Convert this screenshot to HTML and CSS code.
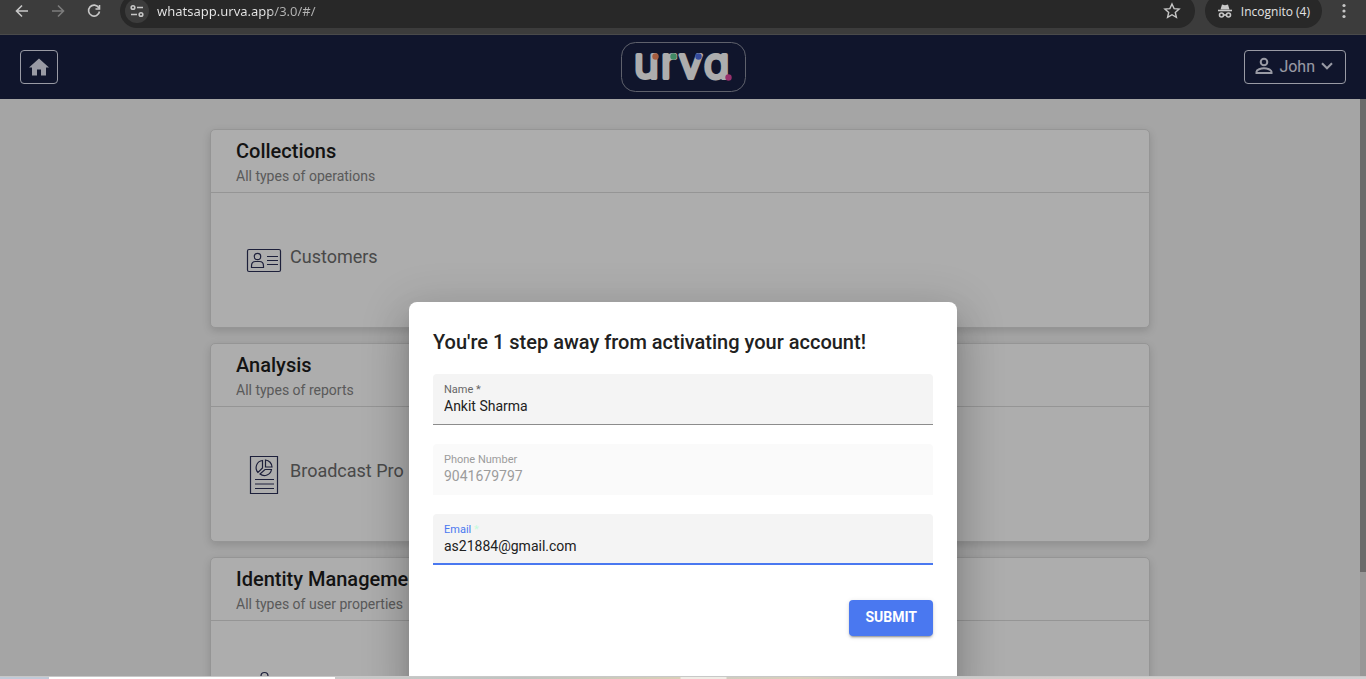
FILE: index.html
```html
<!DOCTYPE html>
<html lang="en">
<head>
    <meta charset="UTF-8">
    <meta name="viewport" content="width=device-width, initial-scale=1.0">
    <title>Urva</title>
    <link rel="stylesheet" href="styles.css">
</head>
<body>
<!-- Browser toolbar -->
<div class="toolbar">
    <button class="tool-btn" aria-label="Back">
        <svg width="16" height="16" viewBox="0 0 16 16"><path d="M14 8H3M8 2.500 2.500 8 8 13.500"/></svg>
    </button>
    <button class="tool-btn tool-btn-off" aria-label="Forward">
        <svg width="16" height="16" viewBox="0 0 16 16"><path d="M2 8h11M8 2.500 13.500 8 8 13.500"/></svg>
    </button>
    <button class="tool-btn" aria-label="Reload">
        <svg width="16" height="16" viewBox="0 0 16 16"><path d="M12.800 4.800A5.500 5.500 0 1 0 13.500 8.500M13.500 2v4h-4"/></svg>
    </button>
    <div class="address">
        <button class="site-btn" aria-label="Site information">
            <svg width="16" height="16" viewBox="0 0 16 16"><circle cx="4" cy="4.500" r="1.800"/><path d="M8 4.500h6M2 11.500h6"/><circle cx="12" cy="11.500" r="1.800"/></svg>
        </button>
        <input class="url" type="text" aria-label="Address" value="whatsapp.urva.app/3.0/#/">
        <button class="star-btn" aria-label="Bookmark">
            <svg width="18" height="18" viewBox="0 0 18 18"><path d="M9 2l2.100 4.600 5 .5-3.800 3.300 1.100 4.900L9 12.700l-4.400 2.600 1.100-4.900L1.900 7.100l5-.5z"/></svg>
        </button>
    </div>
    <button class="incognito">
        <svg width="16" height="16" viewBox="0 0 16 16"><path class="solid" d="M3.500 6.500 5 1.500l3 .8 3-.8 1.500 5z"/><path d="M1 7.500h14"/><circle cx="4.500" cy="12" r="2"/><circle cx="11.500" cy="12" r="2"/><path d="M6.500 12h3"/></svg>
        Incognito (4)
    </button>
    <button class="menu-btn" aria-label="Menu">
        <svg width="4" height="16" viewBox="0 0 4 16"><circle cx="2" cy="2.500" r="1.600"/><circle cx="2" cy="8" r="1.600"/><circle cx="2" cy="13.500" r="1.600"/></svg>
    </button>
</div>

<div class="page">
    <header class="header">
        <button class="outline-btn home-btn" aria-label="Home">
            <svg width="20" height="18" viewBox="0 0 20 18"><path d="M8 17.500v-6h4v6h5V9.500h3L10 .5 0 9.500h3v8z"/></svg>
        </button>
        <a href="#" class="logo" aria-label="urva">
            <svg width="125" height="50" viewBox="0 0 125 50">
                <rect class="logo-frame" x="0.500" y="0.500" width="124" height="49" rx="14"/>
                <text class="logo-text" y="36" x="13 40 58 83">urvɑ</text>
                <circle cx="34.500" cy="14.500" r="3.200" fill="#f58a5f"/>
                <circle cx="52.500" cy="14.500" r="3.200" fill="#5fcb96"/>
                <circle cx="77.500" cy="14.500" r="3.200" fill="#4f6fe8"/>
                <circle cx="107.500" cy="35.500" r="3.200" fill="#e0489f"/>
            </svg>
        </a>
        <button class="outline-btn user-btn">
            <svg width="18" height="18" viewBox="0 0 18 18"><circle cx="9" cy="5" r="3.300"/><path d="M1.500 16v-1.200c0-2.100 4.500-3.500 7.500-3.500s7.500 1.400 7.500 3.500V16z"/></svg>
            John
            <svg width="12" height="8" viewBox="0 0 12 8"><path d="M1 1.200 6 6.300 11 1.200"/></svg>
        </button>
    </header>

    <div class="scroll-area">
        <main class="cards">
            <section class="card">
                <div class="card-head">
                    <h2>Collections</h2>
                    <p>All types of operations</p>
                </div>
                <div class="card-body">
                    <a href="#" class="card-link">
                        <svg width="40" height="40" viewBox="0 0 40 40"><rect x="3.500" y="9.500" width="33" height="22" rx="1.500"/><circle cx="13.500" cy="16.500" r="3.200"/><path d="M7.500 27.500V26c0-3 2-4.500 4-4.500h4c2 0 4 1.500 4 4.500v1.500zM23 16.500h11M23 20.500h11M23 24.500h11"/></svg>
                        <span>Customers</span>
                    </a>
                </div>
            </section>

            <section class="card">
                <div class="card-head">
                    <h2>Analysis</h2>
                    <p>All types of reports</p>
                </div>
                <div class="card-body">
                    <a href="#" class="card-link">
                        <svg width="40" height="40" viewBox="0 0 40 40"><path d="M6.500 2.500h27v37h-27zM11 25.500h19M11 30h19M11 34.500h19"/><path d="M18.500 6.500A7.200 7.200 0 0 0 14 18.500l4.500-4.500zM21.500 6v7h6.500A7.200 7.200 0 0 0 21.500 6zM27.500 15.500H21l-5 4.500a7.200 7.200 0 0 0 11.500-4.500z"/></svg>
                        <span>Broadcast Pro</span>
                    </a>
                </div>
            </section>

            <section class="card">
                <div class="card-head">
                    <h2>Identity Management</h2>
                    <p>All types of user properties</p>
                </div>
                <div class="card-body">
                    <a href="#" class="card-link" aria-label="Users">
                        <svg width="40" height="40" viewBox="0 0 40 40"><circle cx="20.500" cy="8" r="3.500"/><path d="M14 18c0-4 3-5 6.500-5s6.500 1 6.500 5z"/></svg>
                    </a>
                </div>
            </section>
        </main>
        <div class="scrollbar"><div class="scrollbar-thumb"></div></div>
    </div>

    <!-- Activation dialog -->
    <div class="backdrop">
        <form class="dialog" role="dialog" aria-labelledby="dialogTitle">
            <h1 id="dialogTitle">You're 1 step away from activating your account!</h1>
            <div class="field">
                <label for="name">Name *</label>
                <input id="name" type="text" value="Ankit Sharma">
            </div>
            <div class="field field-disabled">
                <label for="phone">Phone Number</label>
                <input id="phone" type="tel" value="9041679797" disabled>
            </div>
            <div class="field field-active">
                <label for="email">Email <span class="required">*</span></label>
                <input id="email" type="email" value="as21884@gmail.com">
            </div>
            <div class="actions">
                <button type="submit" class="submit-btn">SUBMIT</button>
            </div>
        </form>
    </div>
</div>

<div class="taskbar"></div>
</body>
</html>
```

FILE: styles.css
```css
:root {
    --toolbar: #3c3c3c;
    --toolbar-dark: #282828;
    --navy: #182042;
    --primary: #4a78f0;
    --border: #dcdcdc;
    --outline: #e2e4f2;
}

* {
    box-sizing: border-box;
}

body {
    margin: 0;
    height: 100vh;
    display: flex;
    flex-direction: column;
    overflow: hidden;
    font-family: Roboto, sans-serif;
}

h1, h2, p {
    margin: 0;
}

button, input {
    font-family: inherit;
    border: none;
    background: none;
    padding: 0;
    margin: 0;
    outline: none;
}

button {
    cursor: pointer;
}

svg {
    display: block;
    flex: none;
}

/* Browser toolbar */
.toolbar {
    flex: none;
    height: 35px;
    display: flex;
    align-items: flex-end;
    padding: 0 16px 6px 4px;
    overflow: hidden;
    background: var(--toolbar);
    border-bottom: 1px solid #4a4a4a;
    font-family: "Noto Sans", sans-serif;
}

.toolbar > * {
    flex: none;
    height: 34px;
    display: flex;
    align-items: center;
    justify-content: center;
}

.toolbar svg {
    fill: none;
    stroke: #c7c7c7;
    stroke-width: 1.6;
}

.tool-btn {
    width: 36px;
}

.toolbar .tool-btn-off svg {
    stroke: #7c7c7c;
}

.toolbar .address {
    flex: 1;
    margin: 0 10px 0 8px;
    padding: 0 14px 0 5px;
    border-radius: 17px;
    background: var(--toolbar-dark);
}

.site-btn {
    width: 24px;
    height: 24px;
    display: flex;
    align-items: center;
    justify-content: center;
    border-radius: 50%;
    background: var(--toolbar);
}

.url {
    flex: 1;
    margin-left: 8px;
    font-size: 13px;
    color: transparent;
    background: linear-gradient(90deg, #e8e8e8 115px, #b4b4b4 115px);
    -webkit-background-clip: text;
    background-clip: text;
}

.toolbar .star-btn svg {
    stroke-width: 1.4;
}

.incognito {
    gap: 8px;
    padding: 0 12px;
    border-radius: 17px;
    background: var(--toolbar-dark);
    color: #e3e3e3;
    font-family: "Open Sans", sans-serif;
    font-size: 12px;
}

.incognito .solid {
    fill: #c7c7c7;
    stroke: none;
}

.menu-btn {
    margin-left: 16px;
    width: 12px;
}

.toolbar .menu-btn svg {
    fill: #c7c7c7;
    stroke: none;
}

/* Page */
.page {
    flex: 1;
    min-height: 0;
    position: relative;
    display: flex;
    flex-direction: column;
    overflow: hidden;
    background: #f3f3f3;
}

.header {
    flex: none;
    height: 64px;
    display: grid;
    grid-template-columns: 1fr auto 1fr;
    align-items: center;
    padding: 0 20px;
    background: var(--navy);
}

.outline-btn {
    height: 34px;
    display: flex;
    align-items: center;
    justify-content: center;
    border: 1px solid var(--outline);
    border-radius: 4px;
    color: var(--outline);
    font-size: 16px;
}

.home-btn {
    width: 38px;
    fill: var(--outline);
}

.user-btn {
    justify-self: end;
    gap: 6px;
    padding: 0 12px 2px 10px;
}

.user-btn svg {
    fill: none;
    stroke: var(--outline);
    stroke-width: 2;
}

.logo-frame {
    fill: none;
    stroke: #8d909f;
}

.logo-text {
    font-family: Inter, sans-serif;
    font-size: 42px;
    font-weight: 300;
    fill: #fff;
    stroke: #fff;
    stroke-width: 4;
    stroke-linejoin: round;
}

.scroll-area {
    flex: 1;
    min-height: 0;
    display: flex;
}

.cards {
    flex: 1;
    display: flex;
    flex-direction: column;
    align-items: center;
    gap: 15px;
    padding: 30px 20px;
    overflow: hidden;
}

.card {
    flex: none;
    width: 100%;
    max-width: 940px;
    background: #fff;
    border: 1px solid var(--border);
    border-radius: 5px;
    box-shadow: 0 3px 8px rgb(0 0 0 / 0.14);
}

.card-head {
    padding: 8px 25px 6px;
    border-bottom: 1px solid var(--border);
}

.card-head h2 {
    font-size: 20px;
    font-weight: 500;
    line-height: 26px;
    color: #1c1c1c;
}

.card-head p {
    font-size: 14px;
    line-height: 20px;
    margin-top: 2px;
    color: #858585;
}

.card-body {
    display: flex;
    align-items: center;
    height: 134px;
    padding: 0 33px;
}

.card-link {
    display: flex;
    align-items: center;
    gap: 6px;
    color: #6c6c6c;
    font-size: 18px;
    text-decoration: none;
}

.card-link span {
    padding-bottom: 8px;
}

.card-link svg {
    fill: none;
    stroke: #2c3058;
    stroke-width: 1.2;
}

.scrollbar {
    width: 6px;
    background: #dfdfdf;
}

.scrollbar-thumb {
    height: 82%;
    background: #9c9c9c;
}

/* Dialog */
.backdrop {
    position: absolute;
    inset: 0;
    display: flex;
    justify-content: center;
    align-items: flex-start;
    padding-top: 267px;
    background: rgb(0 0 0 / 0.32);
}

.dialog {
    width: 100%;
    max-width: 548px;
    padding: 24px 24px 64px;
    border-radius: 8px;
    background: #fff;
    box-shadow: 0 11px 15px -7px rgb(0 0 0 / 0.2), 0 24px 38px 3px rgb(0 0 0 / 0.14), 0 9px 46px 8px rgb(0 0 0 / 0.12);
}

.dialog h1 {
    font-size: 20px;
    font-weight: 500;
    line-height: 32px;
    margin-bottom: 16px;
    color: #212121;
}

.field {
    height: 51px;
    display: flex;
    flex-direction: column;
    margin-bottom: 19px;
    padding: 9px 11px 0;
    border-bottom: 1px solid #8c8c8c;
    border-radius: 4px 4px 0 0;
    background: #f4f4f4;
}

.field label {
    font-size: 11px;
    line-height: 13px;
    color: #666;
}

.field input {
    font-size: 14px;
    line-height: 20px;
    height: 20px;
    color: #212121;
}

.field-disabled {
    border-bottom-color: #fafafa;
    background: #fafafa;
}

.field-disabled label,
.field-disabled input {
    color: #9c9c9c;
}

.field-active {
    border-bottom: 2px solid var(--primary);
}

.field-active label {
    color: var(--primary);
}

.required {
    color: #c4fbdc;
}

.actions {
    display: flex;
    justify-content: flex-end;
    margin-top: 35px;
}

.submit-btn {
    height: 36px;
    padding: 0 16px 2px;
    border-radius: 4px;
    background: var(--primary);
    color: #fff;
    font-size: 14px;
    font-weight: 700;
    box-shadow: 0 3px 1px -2px rgb(0 0 0 / 0.2), 0 2px 2px rgb(0 0 0 / 0.14), 0 1px 5px rgb(0 0 0 / 0.12);
}

.taskbar {
    flex: none;
    height: 3px;
    border-top: 1px solid #c8c8c8;
    background: linear-gradient(90deg, #c0cad8 49px, #fff 49px, #fff 335px, #c8c8c8 335px, #bfc4c0 520px, #d8d0b8 680px, #efede6 681px, #efede6 726px, #d0cdc0 727px, #d9d0bc 800px, #c8c8c8 900px, #d5cdca 1100px, #d0d0d2 1366px);
}
```
